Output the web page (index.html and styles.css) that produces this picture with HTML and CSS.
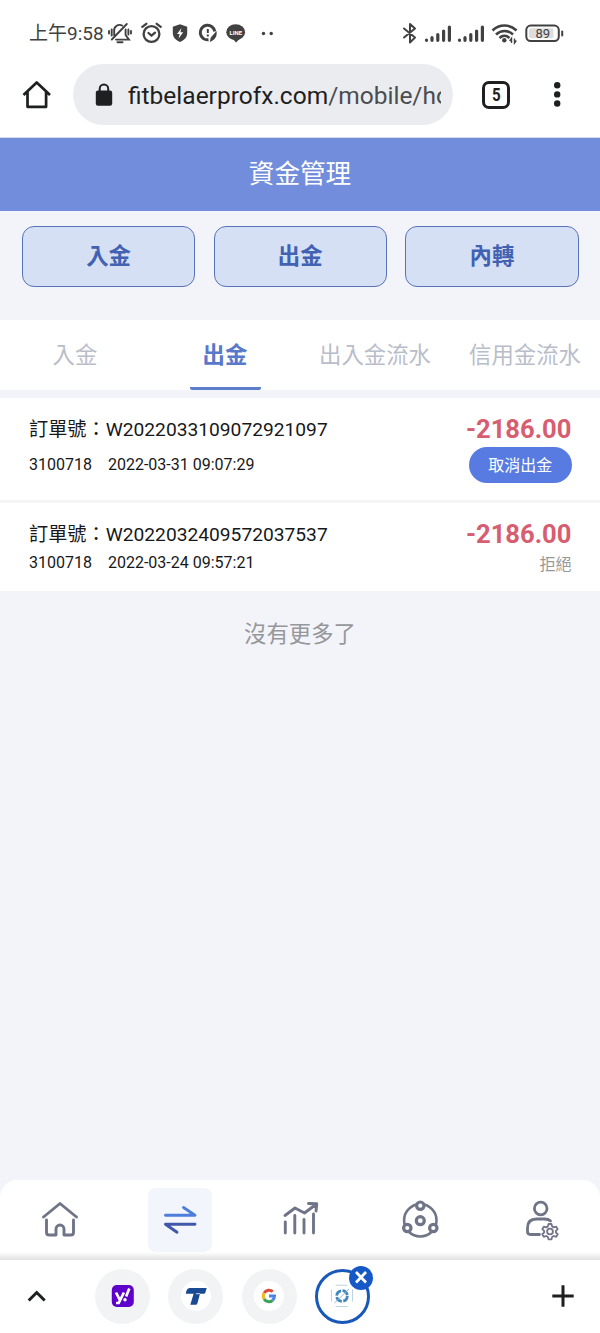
FILE: index.html
```html
<!DOCTYPE html>
<html lang="zh-Hant">
<head>
<meta charset="utf-8">
<title>資金管理</title>
<link rel="stylesheet" href="styles.css">
</head>
<body>
<div class="screen">
  <header class="status">
    <span class="clock">上午9:58</span>
    <svg class="s-bell" width="24" height="24" viewBox="108 21 24 24" fill="none" stroke="#414141" stroke-width="1.900" stroke-linecap="round">
      <path d="M114.200 35.500V31.500a5.600 5.600 0 0 1 8-6M125.600 29.500v5.500l3.400 4.600H116M111.800 39.500l15-15.500M109 31v2.500M111.700 29.500v6M128.400 29.500v5M131 31v2.500"/><path d="M117.500 42.300h5" stroke-width="2"/>
    </svg>
    <svg class="s-alarm" width="22" height="24" viewBox="141 21 22 24" fill="none" stroke="#414141" stroke-width="2.300" stroke-linecap="round" stroke-linejoin="round">
      <circle cx="151.500" cy="34" r="7.900"/><path d="M148.500 33l3 2.700 3.500-3M142.300 26.800l4-3M160.700 26.800l-4-3"/>
    </svg>
    <svg class="s-shield" width="16" height="24" viewBox="172 21 16 24">
      <path d="M180 24.200l7.200 2.600v6.200c0 4.500-3.200 7.300-7.200 9-4-1.700-7.200-4.500-7.200-9v-6.200z" fill="#414141"/><path d="M181.500 28l-4.500 6h2.600l-1 4.500 4.600-6.200h-2.800z" fill="#fff"/>
    </svg>
    <svg class="s-chat" width="20" height="24" viewBox="198 21 20 24" fill="none" stroke="#414141" stroke-width="3">
      <path d="M208.500 39.800a7.300 7.300 0 1 1 6.300-8.300"/><path d="M207.800 29v4M207.800 34.500v2" stroke-width="2"/><path d="M209.800 42l1-4.500 5.700-6.500c.8 5-1 8.500-6.700 11z" fill="#414141" stroke="none"/>
    </svg>
    <svg class="s-line" width="20" height="24" viewBox="226 21 20 24">
      <ellipse cx="235.700" cy="32.200" rx="9.400" ry="7.900" fill="#414141"/><path d="M232 38l4 4.500 5-5z" fill="#414141"/>
      <text x="235.700" y="34.700" text-anchor="middle" class="line-text">LINE</text>
    </svg>
    <svg class="s-dots" width="14" height="24" viewBox="261 21 14 24" fill="#414141"><circle cx="263.500" cy="33.500" r="1.700"/><circle cx="271.200" cy="33.500" r="1.700"/></svg>
    <svg class="s-bt" width="16" height="24" viewBox="402 21 16 24" fill="none" stroke="#414141" stroke-width="2" stroke-linejoin="round" stroke-linecap="round"><path d="M404 28.500l11 9-5 5V24l5 4.500-11 9"/></svg>
    <svg class="s-sig" width="28" height="24" viewBox="424 21 28 24" stroke="#414141" stroke-width="3.200" stroke-linecap="round"><path d="M426.500 40v.3M432 37.700v2.600M437.800 34.500v5.800M443.600 31v9.300M449.400 27v13.300"/></svg>
    <svg class="s-sig2" width="28" height="24" viewBox="424 21 28 24" stroke="#414141" stroke-width="3.200" stroke-linecap="round"><path d="M426.500 40v.3M432 37.700v2.600M437.800 34.500v5.800M443.600 31v9.300M449.400 27v13.300"/></svg>
    <svg class="s-wifi" width="28" height="24" viewBox="491 21 28 24" fill="none" stroke="#414141" stroke-width="2.600"><path d="M492.500 30.500c7-6.700 17-6.700 24 0M496 34.500c5-4.700 12-4.700 17 0M499.500 38c3-2.800 7-2.800 10 0"/><circle cx="504.300" cy="40.300" r="2.200" fill="#414141" stroke="none"/><path d="M511.500 43v-4.500l-1.800 2.500M514.500 38.500v4.500l1.800-2.500" stroke-width="1.400"/></svg>
    <svg class="s-batt" width="40" height="24" viewBox="525 21 40 24"><rect x="526.300" y="25.600" width="32.500" height="15.400" rx="4.500" fill="#fff" stroke="#414141" stroke-width="2"/><rect x="529" y="28.300" width="24.500" height="10" rx="2" fill="#ddd"/><path d="M562.200 31.500v4" stroke="#414141" stroke-width="2" stroke-linecap="round"/><text x="542.700" y="38" text-anchor="middle" class="batt-text">89</text></svg>
  </header>

  <div class="toolbar">
    <svg class="t-home" width="30" height="30" viewBox="22 80 30 30" fill="none" stroke="#1e1f21" stroke-width="2.700" stroke-linejoin="round"><path d="M23.500 95L36.700 82.500 50 95M27.500 92v14.800h18.600V92"/></svg>
    <div class="omnibox">
      <svg width="18" height="24" viewBox="95 82 18 24"><rect x="95.800" y="89.500" width="16.400" height="15.300" rx="2.200" fill="#1e1f21"/><path d="M99.700 90v-2.200a4.200 4.200 0 0 1 8.500 0V90" fill="none" stroke="#1e1f21" stroke-width="2"/></svg>
      <span class="url">fitbelaerprofx.com<span class="path">/mobile/home</span></span>
    </div>
    <span class="tab-count"><span class="digit">5</span></span>
    <svg class="t-more" width="8" height="30" viewBox="553 80 8 30" fill="#1e1f21"><circle cx="557.200" cy="85.300" r="3.200"/><circle cx="557.200" cy="94.400" r="3.200"/><circle cx="557.200" cy="103.500" r="3.200"/></svg>
  </div>

  <h1 class="title">資金管理</h1>
  <main class="content">
    <div class="actions">
      <button>入金</button><button>出金</button><button>內轉</button>
    </div>
    <nav class="tabs">
      <span>入金</span><span class="active">出金</span><span>出入金流水</span><span>信用金流水</span>
    </nav>
    <section class="orders">
      <article class="order first">
        <div class="info"><div class="number">訂單號：W2022033109072921097</div><div class="meta"><span>3100718</span><span>2022-03-31 09:07:29</span></div></div>
        <div class="side"><div class="amount">-2186.00</div><button class="cancel">取消出金</button></div>
      </article>
      <article class="order second">
        <div class="info"><div class="number">訂單號：W2022032409572037537</div><div class="meta"><span>3100718</span><span>2022-03-24 09:57:21</span></div></div>
        <div class="side"><div class="amount">-2186.00</div><div class="state">拒絕</div></div>
      </article>
    </section>
    <p class="end">沒有更多了</p>
  </main>

  <nav class="bottom-nav">
    <span class="item"><svg width="64" height="64" viewBox="28 1188 64 64" fill="none" stroke="#6f7487" stroke-width="2.900" stroke-linecap="round" stroke-linejoin="round"><path d="M43.500 1217l16.500-13.500 16.500 13.500M46.500 1220v12.500q0 2.500 2.500 2.500h7v-6a4 4 0 0 1 8 0v6h7q2.500 0 2.500-2.500V1220"/></svg></span>
    <span class="item on"><svg width="64" height="64" viewBox="148 1188 64 64" fill="none" stroke-width="2.900" stroke-linecap="round" stroke-linejoin="round"><path d="M165.500 1215.200h29.500l-11.500-7.700" stroke="#4d7edb"/><path d="M195 1224.200h-29.500l11.500 8" stroke="#4057aa"/></svg></span>
    <span class="item"><svg width="64" height="64" viewBox="268 1188 64 64" fill="none" stroke="#6f7487" stroke-width="2.900" stroke-linecap="round" stroke-linejoin="round"><path d="M285.300 1222v11M294.800 1215.500v17.500M304 1219.500v13.500M313.500 1214v19M285 1215.500l10-7.500 9.500 5 12-9M308.500 1203.500l8.300.2-.8 7.300"/></svg></span>
    <span class="item"><svg width="64" height="64" viewBox="388 1188 64 64" fill="none" stroke="#6f7487"><circle cx="420.300" cy="1220.300" r="16.200" stroke-width="2.600"/><g fill="#fff" stroke-width="3.200"><circle cx="420.300" cy="1205.700" r="3.700"/><circle cx="407.300" cy="1228" r="3.700"/><circle cx="433.300" cy="1228" r="3.700"/><circle cx="420.300" cy="1220.700" r="4"/></g></svg></span>
    <span class="item"><svg width="64" height="64" viewBox="508 1188 64 64" fill="none" stroke="#6f7487" stroke-width="2.800" stroke-linecap="round"><circle cx="540.700" cy="1208.500" r="6.300"/><path d="M539.500 1234.500h-9q-3 0-3-3v-3.500q0-9 9-9h8q4 0 6 2"/><circle cx="550" cy="1231.500" r="2.900" stroke-width="1.800"/><path d="M548.500 1224h3l.6 2.400 1.700 1 2.400-.8 1.500 2.600-1.800 1.700v1.600l1.800 1.700-1.500 2.600-2.400-.8-1.700 1-.6 2.400h-3l-.6-2.400-1.700-1-2.400.8-1.500-2.600 1.800-1.700v-1.600l-1.800-1.700 1.500-2.600 2.400.8 1.700-1z" stroke-width="1.800" stroke-linejoin="round"/></svg></span>
  </nav>

  <footer class="tab-strip">
    <svg class="chevron" width="20" height="20" viewBox="27 1286 20 20" fill="none" stroke="#1e1f21" stroke-width="3"><path d="M28.700 1300.500l8-8 8 8"/></svg>
    <span class="site"><svg width="30" height="30" viewBox="107.500 1281.500 30 30"><rect x="111.300" y="1285.500" width="22" height="22" rx="5" fill="#5e01ca"/><g fill="none" stroke="#fff" stroke-width="2.700"><path d="M115.500 1293l3.600 7M123.400 1293l-5.200 10.500h-2.700M128.800 1289l-3.200 8"/></g><circle cx="124.500" cy="1300.300" r="1.700" fill="#fff"/></svg></span>
    <span class="site"><svg width="30" height="30" viewBox="180.300 1281.300 30 30"><circle cx="195.300" cy="1296.300" r="15" fill="#fff"/><path d="M189 1288.300h17l-1.500 5-1 .7h-4.200l-2.700 10-1 1h-6l3.300-11h-7.700c.2-3 1.200-5.400 3.800-5.700z" fill="#194a94"/><path d="M195.300 1294h4" stroke="#fff" stroke-width=".8"/></svg></span>
    <span class="site"><svg width="30" height="30" viewBox="254 1281.300 30 30"><circle cx="269" cy="1296.300" r="15" fill="#fff"/><g fill="none" stroke-width="3"><path d="M272.800 1292a5.600 5.600 0 0 0-8.700 1.400" stroke="#df4b3b"/><path d="M264.100 1293.400a5.600 5.600 0 0 0 0 5.800" stroke="#f3b922"/><path d="M264.100 1299.200a5.600 5.600 0 0 0 8.300 1.600" stroke="#37a357"/><path d="M272.400 1300.800a5.600 5.600 0 0 0 2.100-4.400H269" stroke="#4c83e8"/></g></svg></span>
    <span class="site current"><svg width="30" height="30" viewBox="327.500 1281.500 30 30" fill="none"><path d="M336 1285.700h12M336 1307h12M332 1290v12M353 1290v12" stroke="#bed3df" stroke-width="1.100"/><circle cx="342.500" cy="1296.500" r="5.300" stroke="#4388bd" stroke-width="2.800" stroke-dasharray="6.800 1.500"/><path d="M335 1303.500l14.500-14" stroke="#8db0c9" stroke-width=".9"/></svg>
      <svg class="close" width="24" height="24" viewBox="0 0 24 24"><circle cx="12" cy="12" r="12" fill="#1758c7"/><path d="M7 6l10 10.500M17 6L7 16.500" stroke="#fff" stroke-width="2.700"/></svg></span>
    <svg class="plus" width="24" height="24" viewBox="0 0 24 24" stroke="#1e1f21" stroke-width="3"><path d="M1.300 12h21.400M12 1.300v21.400"/></svg>
  </footer>
</div>
</body>
</html>
```
FILE: styles.css
```css
* { box-sizing: border-box; }
body { margin: 0; background: #fff; font-family: Roboto, "Noto Sans CJK TC", sans-serif; }
svg { display: block; flex: none; }
button { font: inherit; padding: 0; border: 0; }
.screen { width: 600px; height: 1333px; display: flex; flex-direction: column; overflow: hidden; }

.status { height: 62px; padding: 4px 0 0 29px; display: flex; align-items: center; color: #414141; }
.clock { width: 79px; padding-top: 2px; font-size: 19px; line-height: 24px; white-space: nowrap; }
.s-alarm { margin-left: 9px; }
.s-shield { margin-left: 9px; }
.s-chat { margin-left: 10px; }
.s-line { margin-left: 8px; }
.s-dots { margin-left: 15px; }
.s-bt { margin-left: 127px; }
.s-sig { margin-left: 6px; }
.s-sig2 { margin-left: 5px; }
.s-wifi { margin-left: 6px; }
.s-batt { margin-left: 6px; }
.line-text { font: 700 6px Roboto, sans-serif; fill: #fff; }
.batt-text { font: 400 13px Roboto, sans-serif; fill: #414141; }

.toolbar { height: 76px; padding: 2px 0 0 22px; display: flex; align-items: flex-start; border-bottom: 1px solid #d5dded; }
.t-home { margin-top: 16px; }
.omnibox { width: 380px; height: 61px; margin-left: 21px; padding: 0 12px 0 22px; display: flex; align-items: center; gap: 15px; border-radius: 31px; background: #ebecf0; }
.url { flex: 1; overflow: hidden; white-space: nowrap; font-size: 24.500px; line-height: 34px; color: #1e1f21; padding-top: 2px; }
.path { color: #4b4c4f; }
.tab-count { width: 28px; height: 28px; margin: 17px 0 0 29px; border: 3px solid #1e1f21; border-radius: 7px; font-size: 18.500px; font-weight: 700; line-height: 22px; text-align: center; color: #1e1f21; }
.digit { display: inline-block; transform: scaleX(.82); }
.t-more { margin: 16px 0 0 43px; }

.title { margin: 0; height: 73px; background: #718ddb; color: #fff; font-size: 25.600px; font-weight: 400; line-height: 73px; text-align: center; }
.content { flex: 1; background: #f2f4f9; }
.actions { height: 109px; padding: 15.400px 21.500px 0 22px; display: flex; gap: 18.500px; }
.actions button { flex: 1; height: 61px; border: 1px solid #5873b8; border-radius: 12px; background: #d6e0f5; color: #4161b2; font-size: 22.400px; font-weight: 700; line-height: 59px; }
.tabs { height: 70px; display: grid; grid-template-columns: repeat(4, 1fr); background: #fff; color: #b9bdc9; font-size: 22.400px; line-height: 70px; text-align: center; }
.tabs .active { width: 71px; height: 70px; justify-self: center; border-bottom: 3px solid #5c7dca; border-radius: 2px; color: #5878cb; font-weight: 700; }
.orders { margin-top: 8px; background: #fff; color: #17181a; }
.order { display: flex; justify-content: space-between; padding: 16px 28.500px 0 29px; }
.first { height: 104.500px; border-bottom: 3.500px solid #f5f5f6; }
.second { height: 88.500px; }
.number { padding-top: 1px; font-size: 19.200px; line-height: 30px; white-space: nowrap; }
.meta { display: flex; gap: 16px; font-size: 16px; line-height: 28px; }
.first .meta { margin-top: 6px; }
.second .meta { margin-top: -1px; }
.side { display: flex; flex-direction: column; align-items: flex-end; }
.amount { color: #d75d70; font-size: 25.600px; font-weight: 700; line-height: 31px; }
.cancel { width: 102.500px; height: 36px; margin-top: 2px; border-radius: 18px; background: #577be0; color: #fff; font-size: 16px; line-height: 36px; padding-top: 1px; }
.state { color: #999; font-size: 16px; line-height: 29px; }
.end { margin: 26px 0 0; color: #96979b; font-size: 22.400px; line-height: 34px; text-align: center; }

.bottom-nav { height: 80px; background: linear-gradient(#fff 90%, #e1e1e2); border-radius: 18px 18px 0 0; box-shadow: 0 -20px 0 20px #f2f4f9; display: grid; grid-template-columns: repeat(5, 1fr); justify-items: center; padding-top: 8px; }
.item { width: 64px; height: 64px; border-radius: 8px; }
.on { background: #f2f5fc; }

.tab-strip { height: 73px; position: relative; background: #fff; display: flex; align-items: center; padding: 0 0 1px 27px; }
.site { width: 55px; height: 55px; border-radius: 50%; background: #f2f3f5; display: flex; align-items: center; justify-content: center; }
.chevron { margin-right: 48px; }
.site + .site { margin-left: 18.300px; }
.current { position: relative; background: #fff; border: 3px solid #1758b8; }
.close { position: absolute; right: -6px; top: -6px; }
.plus { margin-left: 181px; }
```
